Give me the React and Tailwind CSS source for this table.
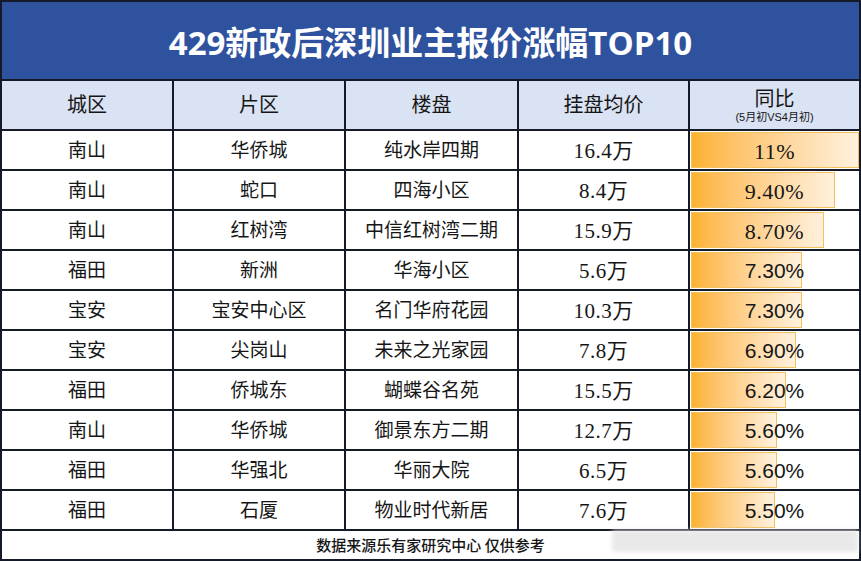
import React from 'react';

const rows = [
  { city: '南山', area: '华侨城', name: '纯水岸四期', price: '16.4万', pct: 11, label: '11%', serif: true },
  { city: '南山', area: '蛇口', name: '四海小区', price: '8.4万', pct: 9.4, label: '9.40%', serif: true },
  { city: '南山', area: '红树湾', name: '中信红树湾二期', price: '15.9万', pct: 8.7, label: '8.70%', serif: true },
  { city: '福田', area: '新洲', name: '华海小区', price: '5.6万', pct: 7.3, label: '7.30%' },
  { city: '宝安', area: '宝安中心区', name: '名门华府花园', price: '10.3万', pct: 7.3, label: '7.30%' },
  { city: '宝安', area: '尖岗山', name: '未来之光家园', price: '7.8万', pct: 6.9, label: '6.90%' },
  { city: '福田', area: '侨城东', name: '蝴蝶谷名苑', price: '15.5万', pct: 6.2, label: '6.20%' },
  { city: '南山', area: '华侨城', name: '御景东方二期', price: '12.7万', pct: 5.6, label: '5.60%' },
  { city: '福田', area: '华强北', name: '华丽大院', price: '6.5万', pct: 5.6, label: '5.60%' },
  { city: '福田', area: '石厦', name: '物业时代新居', price: '7.6万', pct: 5.5, label: '5.50%' },
];

const cjk = "font-['Liberation_Serif','Noto_Sans_CJK_SC',serif]";
const cell = `flex items-center justify-center bg-white pt-[3px] text-[19px] text-[#161616] ${cjk}`;
const head = `flex items-center justify-center bg-[#dae3f3] text-[20px] text-[#161616] ${cjk}`;

export default function App() {
  return (
    <div className="relative flex h-[561px] w-[861px] flex-col gap-[2px] bg-[#151a28] p-[2px]">
      <div className="flex h-[77px] items-center justify-center bg-[#2f529e] pt-[4px] font-['Open_Sans','Noto_Sans_CJK_SC',sans-serif] text-[33px] font-bold text-white">
        429新政后深圳业主报价涨幅TOP10
      </div>

      <div className="grid grid-cols-[170px_170px_171px_169px_1fr] grid-rows-[48px_repeat(10,38px)] gap-[2px]">
        <div className={head}>城区</div>
        <div className={head}>片区</div>
        <div className={head}>楼盘</div>
        <div className={head}>挂盘均价</div>
        <div className={`${head} flex-col leading-none`}>
          <span className="pt-[2px]">同比</span>
          <span className="mt-[3px] font-['Liberation_Sans','Noto_Sans_CJK_SC',sans-serif] text-[11px]">(5月初VS4月初)</span>
        </div>

        {rows.map((r, i) => (
          <React.Fragment key={i}>
            <div className={cell}>{r.city}</div>
            <div className={cell}>{r.area}</div>
            <div className={cell}>{r.name}</div>
            <div className={`${cell} text-[21px] tracking-[0.5px]`}>{r.price}</div>
            <div className="relative flex items-center justify-center bg-white pt-[2px]">
              <div
                className="absolute top-[1px] bottom-[1px] left-[1px] border border-[#f4c15c] bg-gradient-to-r from-[#fcb22c] to-[#fff1dd]"
                style={{ width: `${(r.pct / 11) * 168}px` }}
              />
              <span
                className={`relative text-[#161616] ${
                  r.serif
                    ? "font-['Liberation_Serif',serif] text-[22px] tracking-[0.5px]"
                    : "font-['Liberation_Sans',sans-serif] text-[21px]"
                }`}
              >
                {r.label}
              </span>
            </div>
          </React.Fragment>
        ))}
      </div>

      <div className="flex h-[28px] items-center justify-center bg-white font-['Noto_Sans_CJK_SC',sans-serif] text-[15px] font-medium text-[#161616]">
        数据来源乐有家研究中心 仅供参考
      </div>

      <div className="absolute left-[612px] top-[530px] h-[22px] w-[246px] bg-[#e4e4e4]/80 blur-[2px]" />
    </div>
  );
}
